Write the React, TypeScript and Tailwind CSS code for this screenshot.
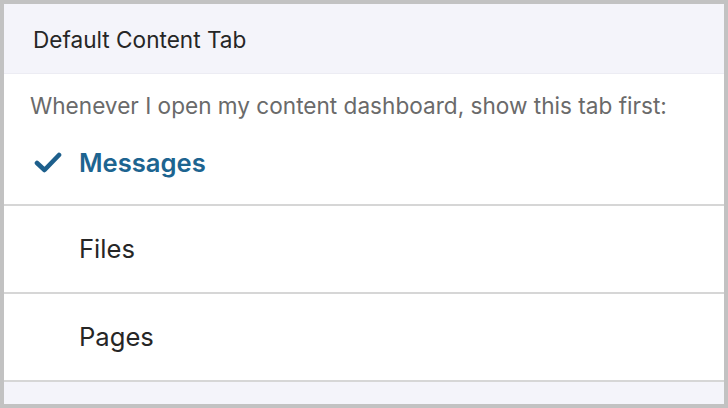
import React from "react";

const tabs = ["Messages", "Files", "Pages"];

function Check() {
    return (
        <svg width="28" height="22" viewBox="0 0 28 22" className="shrink-0">
            <polyline
                points="3,11 10.5,18 25,3"
                fill="none"
                stroke="#1d5f8c"
                strokeWidth="4.6"
                strokeLinecap="round"
                strokeLinejoin="round"
            />
        </svg>
    );
}

export default function App() {
    const selected = "Messages";
    return (
        <div
            className="h-[408px] w-[728px] bg-[#c2c2c2] p-1"
            style={{ fontFamily: "Inter, 'Noto Sans', sans-serif" }}
        >
            <div className="flex h-full flex-col bg-white">
                {/* header */}
                <div className="flex h-[70px] shrink-0 items-center border-b border-[#ececf3] bg-[#f4f4fa] px-[29px] pt-[2px] text-[22.6px] text-[#262626]">
                    Default Content Tab
                </div>

                <p className="px-[26px] pt-[20px] text-[22.6px] leading-[24px] text-[#6a6a6a]">
                    Whenever I open my content dashboard, show this tab first:
                </p>

                {tabs.map((t, i) => (
                    <div
                        key={t}
                        className={`flex h-[88px] shrink-0 items-center gap-[17px] border-b-2 border-[#d6d6d6] px-[30px] text-[25.6px] ${
                            i === 0 ? "pt-1" : ""
                        }`}
                    >
                        {t === selected ? (
                            <>
                                <Check />
                                <span className="font-semibold text-[#1d6490]">{t}</span>
                            </>
                        ) : (
                            <span className="pl-[45px] text-[#262626]">{t}</span>
                        )}
                    </div>
                ))}

                <div className="flex-1 bg-[#f4f4fa]" />
            </div>
        </div>
    );
}
